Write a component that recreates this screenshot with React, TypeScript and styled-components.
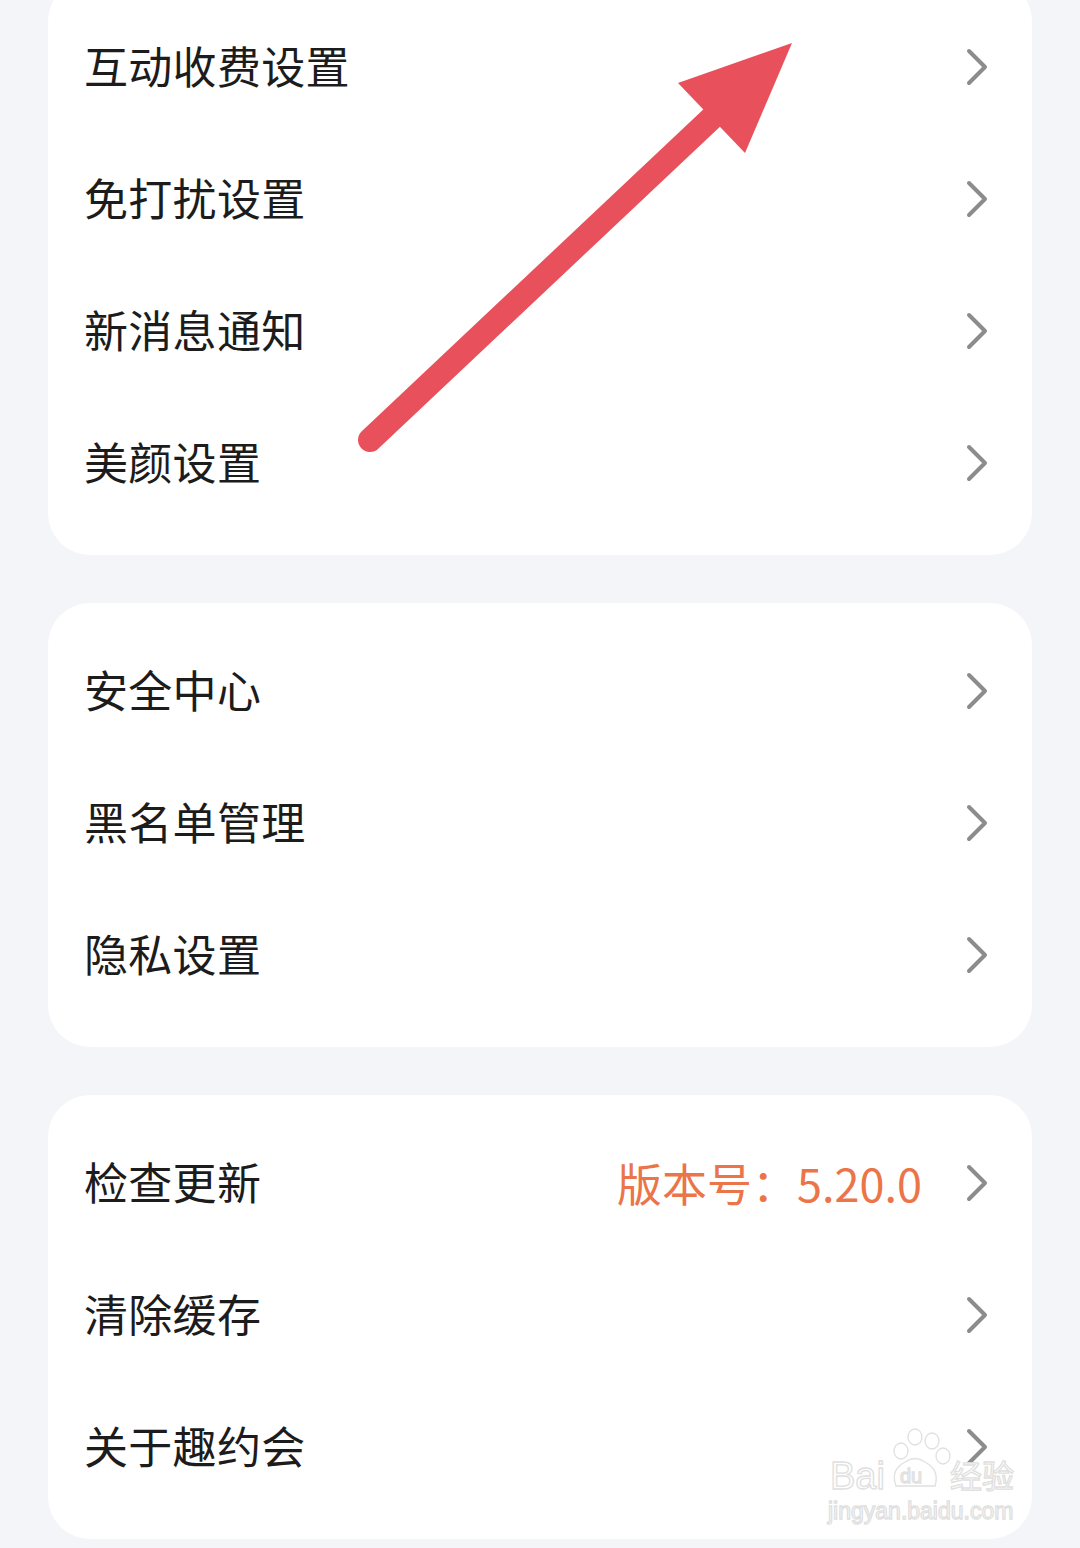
import React from "react";
import styled, { createGlobalStyle } from "styled-components";

const Global = createGlobalStyle`
  html, body {
    margin: 0;
    padding: 0;
    background: #f4f5f9;
  }
  body {
    font-family: "Noto Sans CJK SC", "Noto Sans", sans-serif;
    overflow: hidden;
  }
`;

const Root = styled.div`
  position: relative;
  width: 1080px;
  height: 1548px;
  overflow: hidden;
  background: #f4f5f9;
`;

const List = styled.div`
  display: flex;
  flex-direction: column;
  gap: 48px;
  padding: 0 48px;
  margin-top: -21px;
`;

const Card = styled.section`
  background: #ffffff;
  border-radius: 42px;
  padding: 24px 0;
  display: flex;
  flex-direction: column;
`;

const Row = styled.div`
  height: 132px;
  display: flex;
  align-items: center;
  padding: 0 43px 0 36px;
`;

const Label = styled.span`
  flex: 1;
  font-size: 44px;
  color: #1c1c1c;
  line-height: 1;
  letter-spacing: 0.3px;
  margin-bottom: 8px;
`;

const Value = styled.span`
  font-size: 45px;
  color: #eb7548;
  line-height: 1;
  margin-right: 43px;
  margin-bottom: 6px;
`;

const ChevronSvg = styled.svg`
  width: 24px;
  height: 40px;
  flex: none;
  margin-bottom: 4px;
`;

const Overlay = styled.svg`
  position: absolute;
  left: 0;
  top: 0;
  width: 1080px;
  height: 1548px;
  pointer-events: none;
`;

const Chevron = () => (
  <ChevronSvg viewBox="0 0 24 40">
    <path
      d="M4 4 L20 20 L4 36"
      fill="none"
      stroke="#8c8c8c"
      strokeWidth="4"
      strokeLinecap="round"
      strokeLinejoin="round"
    />
  </ChevronSvg>
);

type Item = { label: string; value?: string };

const groups: Item[][] = [
  [
    { label: "互动收费设置" },
    { label: "免打扰设置" },
    { label: "新消息通知" },
    { label: "美颜设置" },
  ],
  [{ label: "安全中心" }, { label: "黑名单管理" }, { label: "隐私设置" }],
  [
    { label: "检查更新", value: "版本号：5.20.0" },
    { label: "清除缓存" },
    { label: "关于趣约会" },
  ],
];

export default function App() {
  return (
    <Root>
      <Global />
      <List>
        {groups.map((g, gi) => (
          <Card key={gi}>
            {g.map((it) => (
              <Row key={it.label}>
                <Label>{it.label}</Label>
                {it.value && <Value>{it.value}</Value>}
                <Chevron />
              </Row>
            ))}
          </Card>
        ))}
      </List>
      <Overlay viewBox="0 0 1080 1548">
        <line
          x1="370"
          y1="440"
          x2="716"
          y2="114"
          stroke="#e8515c"
          strokeWidth="24"
          strokeLinecap="round"
        />
        <polygon points="792,43 678,83 745,153" fill="#e8515c" />
        <g fill="#ffffff" stroke="#e0e0e0" strokeWidth="1.3">
          <ellipse cx="901" cy="1451" rx="7" ry="8" />
          <ellipse cx="915" cy="1437" rx="7" ry="8" />
          <ellipse cx="932" cy="1441" rx="7" ry="8" />
          <ellipse cx="943" cy="1456" rx="7" ry="8" />
          <path d="M896 1486 Q890 1470 905 1462 Q915 1455 925 1462 Q940 1470 935 1486 Z" />
          <text
            x="830"
            y="1489"
            fontFamily="Liberation Sans, sans-serif"
            fontSize="38"
          >
            Bai
          </text>
          <text
            x="900"
            y="1483"
            fontFamily="Liberation Sans, sans-serif"
            fontSize="20"
          >
            du
          </text>
          <text
            x="950"
            y="1488"
            fontFamily="Noto Sans CJK SC, sans-serif"
            fontSize="32"
          >
            经验
          </text>
          <text
            x="828"
            y="1519"
            fontFamily="Liberation Sans, sans-serif"
            fontSize="23"
          >
            jingyan.baidu.com
          </text>
        </g>
      </Overlay>
    </Root>
  );
}
